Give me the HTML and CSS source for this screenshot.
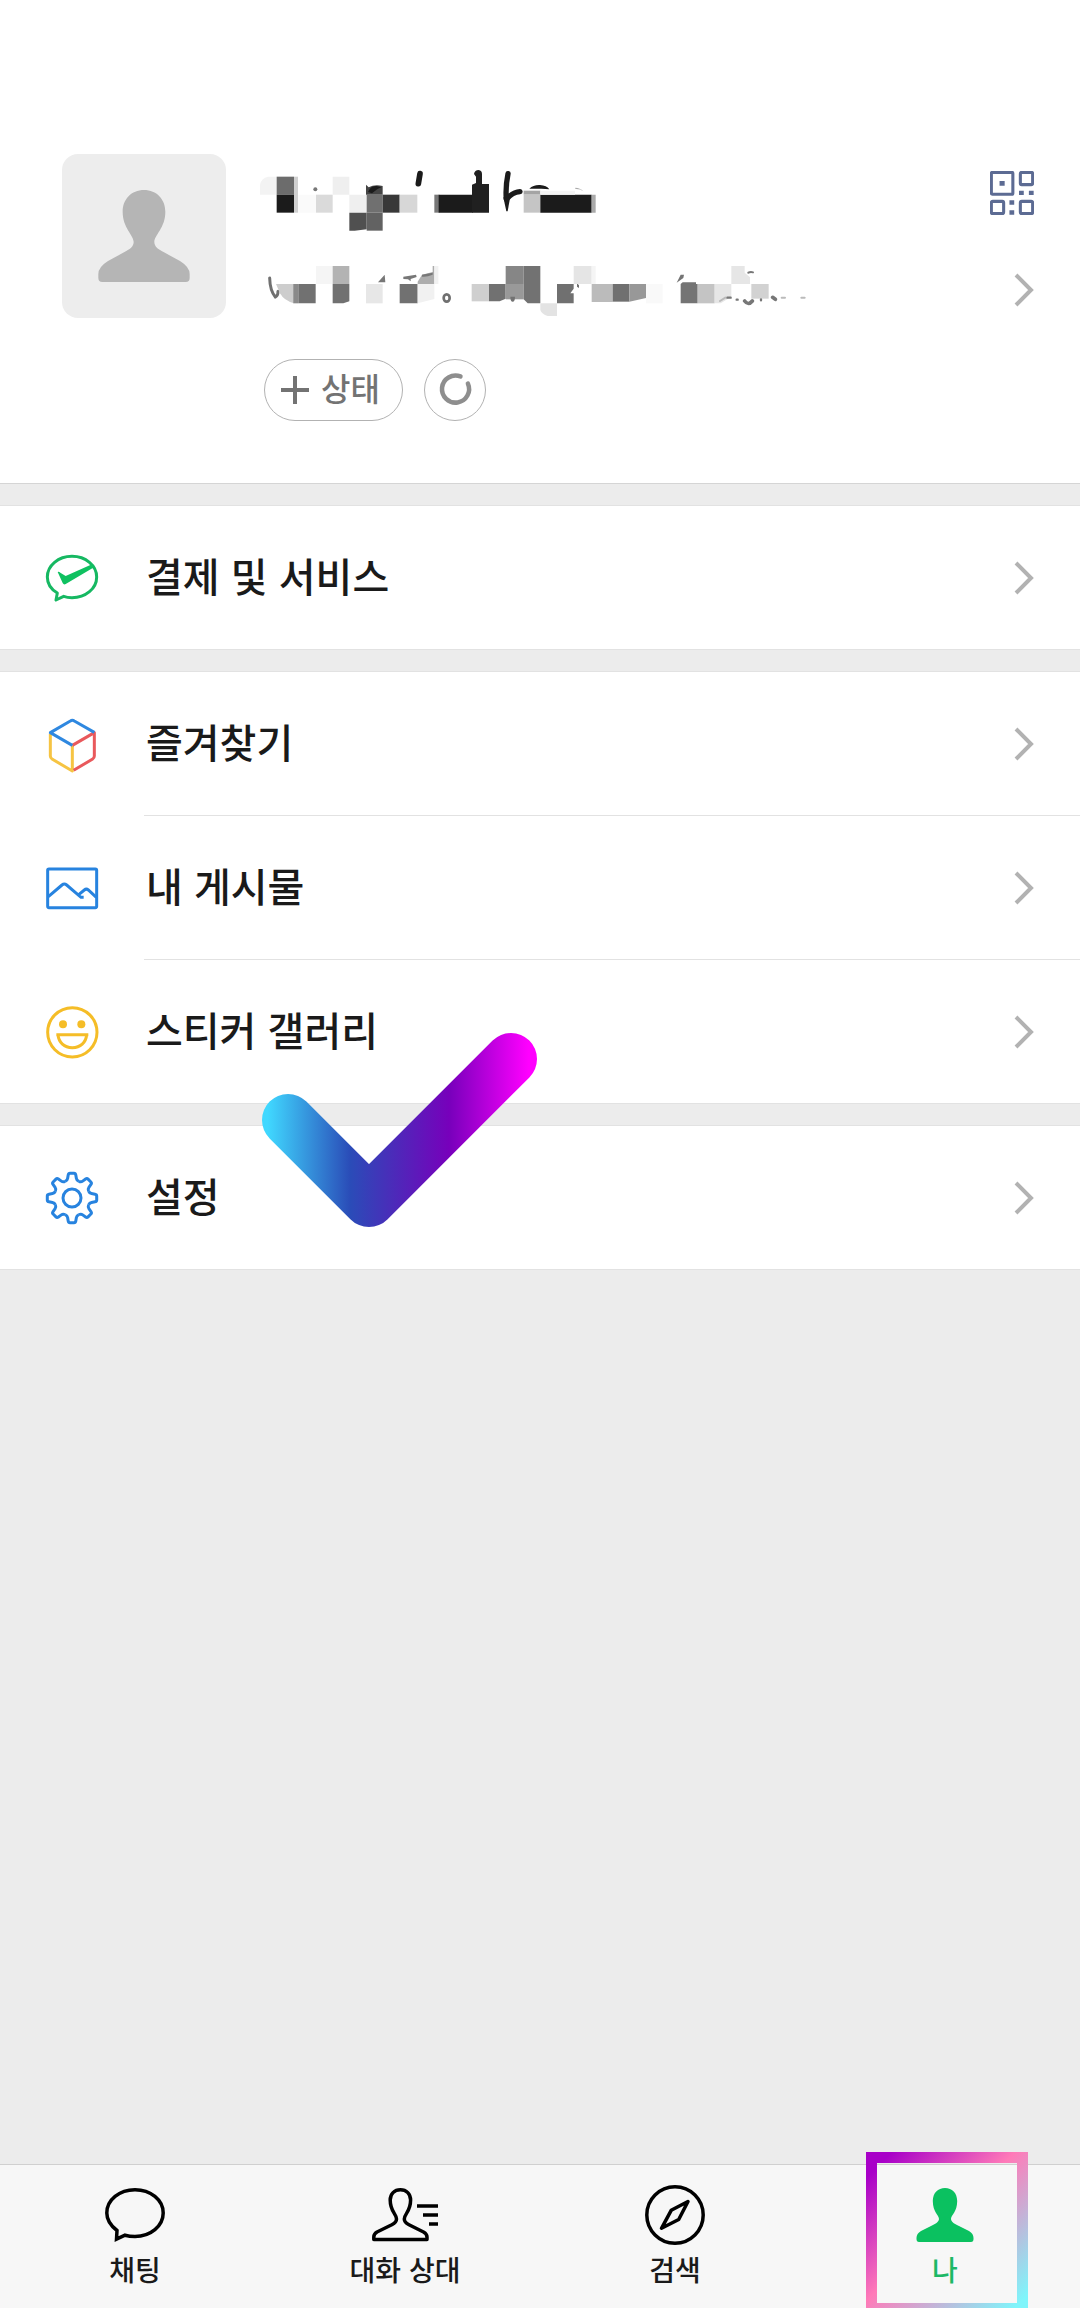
FILE: index.html
```html
<!DOCTYPE html>
<html lang="ko">
<head>
<meta charset="utf-8">
<meta name="viewport" content="width=device-width, initial-scale=1">
<title>나</title>
<link rel="stylesheet" href="styles.css">
</head>
<body>
<div class="app">
  <header class="profile">
    <svg class="avatar" viewBox="66 42 492 492" role="img" aria-label="프로필 사진">
      <path fill="#b5b5b5" d="M312 150C350 150 376 178 376 215C376 264 343 285 343 306C343 318 352 327 372 337L420 363Q449 381 449 402V414Q449 426 437 426H187Q175 426 175 414V402Q175 381 204 363L252 337C272 327 281 318 281 306C281 285 248 264 248 215C248 178 274 150 312 150Z"/>
    </svg>
    <div class="identity">
      <svg class="masked" viewBox="60 12 1662 492" role="img" aria-label="가려진 이름과 아이디">
        <!-- name -->
        <path fill="#f3f3f3" d="M110 80V134H60V104Q64 84 84 80Z"/>
        <path fill="#6c6c6c" d="M110 80h52v54h-52z"/>
        <path fill="#1b1b1b" d="M110 134h52v54h-52z"/>
        <path fill="#d0d0d0" d="M162 80h12v108h-12z"/>
        <path fill="#fafafa" d="M174 134h54v54h-54z"/>
        <path fill="#dadada" d="M228 134h50v54h-50z"/>
        <circle cx="226" cy="118" r="6" fill="#777"/>
        <path fill="#efefef" d="M278 80h50v54h-50zM328 134h52v54h-52z"/>
        <path fill="#444" d="M378 104L386 112Q404 102 428 108V134H378Z"/>
        <path fill="#1b1b1b" d="M384 126Q392 106 410 108L424 112Q410 116 396 130Z"/>
        <path fill="#707070" d="M380 134h48v54h-48z"/>
        <path fill="#383838" d="M428 134h51v54h-51z"/>
        <path fill="#d7d7d7" d="M479 134h53v54h-53z"/>
        <path fill="#505050" d="M328 188h52v50l-36 4h-16z"/>
        <path fill="#626262" d="M380 188h48v54h-48z"/>
        <path stroke="#1b1b1b" stroke-width="17" stroke-linecap="round" d="M540 71L535 101"/>
        <path fill="#777" d="M583 134h15v54h-15z"/>
        <path fill="#1b1b1b" d="M596 134h102v54h-102z"/>
        <path fill="#202020" d="M696 104L708 99V80L702 72Q704 60 716 60Q726 62 726 72V102H747V188H696Z"/>
        <path fill="none" stroke="#1b1b1b" stroke-width="16" stroke-linecap="round" stroke-linejoin="round" d="M804 71Q796 110 799 148Q818 126 840 125"/>
        <path fill="#1b1b1b" d="M790 142L810 144L803 184H799Z"/>
        <path fill="#a4a4a4" d="M851 122h50v12h-50z"/>
        <path fill="#c5c5c5" d="M851 134h50v54h-50z"/>
        <path fill="#1b1b1b" d="M868 116Q880 104 900 105Q920 106 928 118L904 116ZM901 134h154v54h-154z"/>
        <path fill="#f3f3f3" d="M901 122h104v12h-104z"/>
        <path fill="#aaa" d="M1055 134h12v54h-12zM1006 113Q1020 113 1030 124Q1020 116 1006 117Z"/>
        <!-- account id -->
        <path fill="none" stroke="#707070" stroke-width="9" stroke-linecap="round" d="M89 384Q90 422 106 441Q114 438 114 424"/>
        <path fill="#cdcdcd" d="M108 402h54v58q-30-8-42-30z"/>
        <path fill="#8a8a8a" d="M160 402h15v58h-15z"/>
        <path fill="#717171" d="M175 402h52v58h-52zM278 402h50v52l-18 6h-32zM479 402h54v58h-54z"/>
        <path fill="#f5f5f5" d="M228 348h50v54h-50z"/>
        <path fill="#b3b3b3" d="M278 348h50v54h-50z"/>
        <path fill="#e7e7e7" d="M378 402h50v58h-50z"/>
        <path fill="#777" d="M414 397L434 374L436 397ZM490 380L528 374L530 381L512 387V394L504 388L490 387Z"/>
        <path fill="#adadad" d="M533 395L546 374L578 366V348H583V402H533Z"/>
        <path fill="#777" d="M546 374L578 368V374Q560 382 546 380Z"/>
        <path fill="#f1f1f1" d="M583 348h12v54h-12zM533 402h50v45l-50 13z"/>
        <ellipse cx="620" cy="444" rx="9" ry="11" fill="none" stroke="#707070" stroke-width="8"/>
        <path fill="#cfcfcf" d="M695 402h52v52h-52z"/>
        <path fill="#717171" d="M747 402h50v44l-18 8h-32z"/>
        <path fill="#868686" d="M797 348h54v54h-54z"/>
        <path fill="#999" d="M797 402h54v46h-54z"/>
        <path fill="#727272" d="M851 348h50v112h-38l-12-12zM811 440h14q0 15-7 15t-7-15z"/>
        <path fill="#e3e3e3" d="M901 460h50v38h-28q-18-6-22-18z"/>
        <path fill="#707070" d="M951 402h50v14l-10 14h10v30h-50zM1011 400l6 6v8l-6-4z"/>
        <path fill="#e5e5e5" d="M1001 348h54v54h-54z"/>
        <path fill="#f5f5f5" d="M1055 348h12v54h-12z"/>
        <path fill="#bbb" d="M1055 402h63v54h-63z"/>
        <path fill="#707070" d="M1118 402h50v53h-50z"/>
        <path fill="#989898" d="M1168 402h50v42l-50 11z"/>
        <path fill="#f9f9f9" d="M1218 402h50v58h-50z"/>
        <path fill="#747474" d="M1310 398L1322 374L1332 374L1330 384ZM1322 402L1328 397H1368V402H1373V460H1322Z"/>
        <path fill="#c4c4c4" d="M1373 402h51v58h-51z"/>
        <path fill="#e6e6e6" d="M1424 402h50v38l-32 20h-18zM1474 348h40v20l16 14v20h-56z"/>
        <path fill="#d2d2d2" d="M1534 402h52v44h-52z"/>
        <g fill="none" stroke="#777" stroke-linecap="round">
          <path stroke-width="6" d="M1525 368Q1532 364 1539 367"/>
          <path stroke-width="7" d="M1462 443h10M1490 449h3M1563 448v3"/>
          <path stroke-width="11" d="M1514 453Q1525 468 1537 453M1598 442L1606 448"/>
          <path stroke="#bbb" stroke-width="6" d="M1625 443h10M1684 443h10M1440 453L1456 443"/>
        </g>
      </svg>
      <div class="actions">
        <button class="pill" type="button">
          <svg class="plus" viewBox="0 0 28 28" aria-hidden="true"><path d="M14 0V28M0 14H28" stroke="#737373" stroke-width="4"/></svg>
          <span>상태</span>
        </button>
        <button class="ring" type="button" aria-label="친구 상태">
          <svg viewBox="552 57 186 186" aria-hidden="true"><path d="M662 108A42 42 0 1 0 685 130" fill="none" stroke="#8e8e8e" stroke-width="14" stroke-linecap="round"/></svg>
        </button>
      </div>
    </div>
    <div class="profile-links">
      <a href="#qr" aria-label="QR 코드">
        <svg class="qr" viewBox="90 62 129 129" aria-hidden="true">
          <g fill="none" stroke="#5c6b93" stroke-width="9">
            <rect x="94" y="66" width="63" height="64" rx="3"/>
            <rect x="179" y="66" width="36" height="36" rx="4"/>
            <rect x="94" y="151" width="36" height="36" rx="4"/>
            <rect x="179" y="151" width="36" height="36" rx="4"/>
          </g>
          <path fill="#5c6b93" d="M118 91h15v14h-15zM175 120h14v12h-14zM204 120h14v12h-14zM147 148h14v13h-14zM147 177h14v13h-14z"/>
        </svg>
      </a>
      <a href="#profile" aria-label="프로필 보기">
        <svg class="chevron" viewBox="0 0 20 34" aria-hidden="true"><path d="M2 2L17 17L2 32"/></svg>
      </a>
    </div>
  </header>

  <main class="groups">
    <nav class="group" aria-label="서비스">
      <a class="row" href="#pay">
        <svg class="icon" viewBox="48 96 156 156" aria-hidden="true">
          <path fill="none" stroke="#16b862" stroke-width="9" stroke-linejoin="round" d="M82 219C63 208 52 191 52 171C52 136 85 109 126 109S200 136 200 171S167 233 126 233C117 233 109 232 101 229L78 240Z"/>
          <path fill="#0fc160" d="M83 156Q86 153 91 158L107 168L186 133L192 142L111 190Q102 197 98 189Z"/>
        </svg>
        <span class="label">결제 및 서비스</span>
        <svg class="chevron" viewBox="0 0 20 34" aria-hidden="true"><path d="M2 2L17 17L2 32"/></svg>
      </a>
    </nav>

    <nav class="group" aria-label="내 콘텐츠">
      <a class="row" href="#favorites">
        <svg class="icon" viewBox="48 592 156 156" aria-hidden="true">
          <g fill="none" stroke-width="9" stroke-linejoin="round">
            <path stroke="#f6c443" d="M61 640V706Q61 712 66 715L127 751V674"/>
            <path stroke="#e9595c" d="M127 674L193 636V706Q193 712 188 715L131 749"/>
            <path stroke="#2f88e0" d="M127 674L61 636L121 601Q127 597 133 601L193 635"/>
          </g>
        </svg>
        <span class="label">즐겨찾기</span>
        <svg class="chevron" viewBox="0 0 20 34" aria-hidden="true"><path d="M2 2L17 17L2 32"/></svg>
      </a>
      <a class="row" href="#posts">
        <svg class="icon" viewBox="48 66 156 156" aria-hidden="true">
          <g fill="none" stroke="#2783df" stroke-width="9">
            <rect x="53" y="87" width="147" height="116" rx="4"/>
            <path d="M55 170L96 135Q103 129 110 135L153 172H161M147 163L163 150Q169 145 175 150L199 172"/>
          </g>
        </svg>
        <span class="label">내 게시물</span>
        <svg class="chevron" viewBox="0 0 20 34" aria-hidden="true"><path d="M2 2L17 17L2 32"/></svg>
      </a>
      <a class="row" href="#stickers">
        <svg class="icon" viewBox="48 498 156 156" aria-hidden="true">
          <g fill="none" stroke="#f5bd27" stroke-width="9">
            <circle cx="127" cy="577" r="74"/>
            <path d="M79 584H175M84 584C86 608 103 623 127 623S168 608 170 584"/>
          </g>
          <circle cx="99" cy="553" r="12" fill="#f5bd27"/><circle cx="154" cy="553" r="12" fill="#f5bd27"/>
        </svg>
        <span class="label">스티커 갤러리</span>
        <svg class="chevron" viewBox="0 0 20 34" aria-hidden="true"><path d="M2 2L17 17L2 32"/></svg>
      </a>
    </nav>

    <nav class="group marked" aria-label="설정">
      <a class="row" href="#settings">
        <svg class="icon" viewBox="-26 -26 52 52" aria-hidden="true">
          <g fill="none" stroke="#2783df" stroke-width="3">
            <path id="tooth" d="M-6.9 -16.6C-5 -17.4 -4.7 -17.6 -4.4 -19.5L-3.8 -23Q-3.5 -24.7 -2 -24.7H2Q3.5 -24.7 3.8 -23L4.4 -19.5C4.7 -17.6 5 -17.4 6.9 -16.6"/>
            <use href="#tooth" transform="rotate(45)"/>
            <use href="#tooth" transform="rotate(90)"/>
            <use href="#tooth" transform="rotate(135)"/>
            <use href="#tooth" transform="rotate(180)"/>
            <use href="#tooth" transform="rotate(225)"/>
            <use href="#tooth" transform="rotate(270)"/>
            <use href="#tooth" transform="rotate(315)"/>
            <circle r="9"/>
          </g>
        </svg>
        <span class="label">설정</span>
        <svg class="chevron" viewBox="0 0 20 34" aria-hidden="true"><path d="M2 2L17 17L2 32"/></svg>
      </a>
      <svg class="check" viewBox="0 0 275 194" aria-hidden="true">
        <defs>
          <linearGradient id="sweep" gradientUnits="userSpaceOnUse" x1="0" y1="0" x2="275" y2="0">
            <stop offset=".02" stop-color="#40d8ff"/>
            <stop offset=".32" stop-color="#2a4cb8"/>
            <stop offset=".68" stop-color="#7700bb"/>
            <stop offset=".97" stop-color="#ff00ff"/>
          </linearGradient>
        </defs>
        <path d="M26 87L107 168L249 26" fill="none" stroke="url(#sweep)" stroke-width="52" stroke-linecap="round" stroke-linejoin="round"/>
      </svg>
    </nav>
  </main>

  <nav class="tabs" aria-label="하단 메뉴">
    <a class="tab" href="#chats">
      <svg class="tab-icon" viewBox="0 0 60 60" aria-hidden="true"><path fill="none" stroke="#000" stroke-width="3.5" d="M12 45.5C5.5 40.5 1.8 34.5 1.8 28C1.8 15 14.5 4.7 30 4.7S58.2 15 58.2 28S45.5 51.5 30 51.5C26.5 51.5 23.5 51.2 20 50.2L11.5 54.2Z"/></svg>
      <span>채팅</span>
    </a>
    <a class="tab" href="#contacts">
      <svg class="tab-icon wide" viewBox="0 0 66 60" aria-hidden="true"><g fill="none" stroke="#000" stroke-width="3.5"><path stroke-linejoin="round" d="M28.4 4.7C34.5 4.7 38.6 9 38.6 15C38.6 27 32.3 28.5 32.3 34C32.3 37 34.5 38.5 37 39.8L51.5 47Q55 49 55 52V54.5H1.8V52Q1.8 49 5 47L19.8 39.8C22.3 38.5 24.5 37 24.5 34C24.5 28.5 18.2 27 18.2 15C18.2 9 22.3 4.7 28.4 4.7Z"/><path d="M45 21H66M51 30H66M57 39H66"/></g></svg>
      <span>대화 상대</span>
    </a>
    <a class="tab" href="#search">
      <svg class="tab-icon" viewBox="0 0 60 60" aria-hidden="true"><g fill="none" stroke="#000" stroke-width="3.5"><circle cx="30" cy="30" r="28.2"/><path stroke-linejoin="round" d="M43 16.5L26.2 25.3L16.5 43.3L33.7 34.5Z"/></g></svg>
      <span>검색</span>
    </a>
    <a class="tab current" href="#me" aria-current="page">
      <svg class="tab-icon" viewBox="0 0 60 60" aria-hidden="true"><path fill="#0bc160" d="M30 3C37 3 42.2 8 42.2 16C42.2 27 36 30 36 34C36 37 40 39 44 41L54 46Q58.5 48.5 58.5 53V54Q58.5 57 56 57H4Q1.5 57 1.5 54V53Q1.5 48.5 6 46L16 41C20 39 24 37 24 34C24 30 17.8 27 17.8 16C17.8 8 23 3 30 3Z"/></svg>
      <span>나</span>
    </a>
  </nav>
</div>
</body>
</html>
```

FILE: styles.css
```css
*,
*::after {
  box-sizing: border-box;
}

body {
  margin: 0;
  background: #ececec;
  color: #1a1a1a;
  font-family: "Noto Sans CJK KR", "Noto Sans", sans-serif;
  font-weight: 500;
}

a {
  color: inherit;
  text-decoration: none;
}

svg {
  display: block;
}

.app {
  display: flex;
  flex-direction: column;
  min-height: 100vh;
  overflow: hidden;
}

/* Profile */
.profile {
  display: flex;
  gap: 34px;
  padding: 154px 46px 62px 62px;
  background: #fff;
  border-bottom: 1px solid #d5d5d5;
}

.avatar {
  flex: none;
  width: 164px;
  height: 164px;
  border-radius: 16px;
  background: #ededed;
}

.identity {
  flex: 1;
  min-width: 0;
}

.masked {
  width: 554px;
  max-width: 100%;
  height: 164px;
}

.actions {
  display: flex;
  gap: 21px;
  margin-top: 41px;
  padding-left: 4px;
}

.pill,
.ring {
  height: 62px;
  border: 1px solid #b2b2b2;
  border-radius: 31px;
  background: #fff;
  color: #737373;
  font: inherit;
}

.pill {
  display: flex;
  align-items: center;
  gap: 12px;
  padding: 0 22px 0 16px;
  font-size: 32px;
  line-height: 40px;
}

.pill span {
  padding-bottom: 6px;
}

.plus {
  width: 28px;
  height: 28px;
}

.ring {
  width: 62px;
  padding: 0;
}

.profile-links {
  display: flex;
  flex-direction: column;
  align-items: flex-end;
  gap: 58px;
  padding-top: 17px;
}

.qr {
  width: 44px;
  height: 44px;
}

.chevron {
  flex: none;
  width: 20px;
  height: 34px;
  fill: none;
  stroke: #b2b2b2;
  stroke-width: 4;
}

/* Menu groups */
.groups {
  display: flex;
  flex: 1;
  flex-direction: column;
  gap: 21px;
  padding: 21px 0;
}

.group {
  background: #fff;
  border-top: 1px solid #e2e2e2;
  border-bottom: 1px solid #e2e2e2;
}

.row {
  display: flex;
  align-items: center;
  gap: 48px;
  height: 143px;
  padding: 0 46px;
}

.row + .row {
  height: 144px;
  border-top: 1px solid transparent;
  background: linear-gradient(#e2e2e2, #e2e2e2) 144px 0 / 100% 1px no-repeat border-box;
}

.icon {
  flex: none;
  width: 52px;
  height: 52px;
  overflow: visible;
}

.label {
  flex: 1;
  padding-bottom: 6px;
  font-size: 40px;
  line-height: 56px;
}

.marked {
  position: relative;
}

.check {
  position: absolute;
  top: -93px;
  left: 262px;
  width: 275px;
  height: 194px;
  pointer-events: none;
}

/* Bottom tabs */
.tabs {
  display: grid;
  grid-template-columns: repeat(4, 1fr);
  background: #f7f7f7;
  border-top: 1px solid #d0d0d0;
}

.tab {
  position: relative;
  display: flex;
  flex-direction: column;
  align-items: center;
  gap: 4px;
  padding: 20px 0 19px;
  font-size: 28px;
  line-height: 40px;
}

.tab-icon {
  width: 60px;
  height: 60px;
}

.tab-icon.wide {
  width: 66px;
}

.current {
  color: #1db866;
}

.current::after {
  content: "";
  position: absolute;
  top: -13px;
  bottom: -6px;
  left: 50%;
  width: 162px;
  margin-left: -79px;
  border: 11px solid;
  border-image: linear-gradient(135deg, #a800c8 8%, #ff7ab8 46%, #7ff5fb 94%) 11;
}
```
